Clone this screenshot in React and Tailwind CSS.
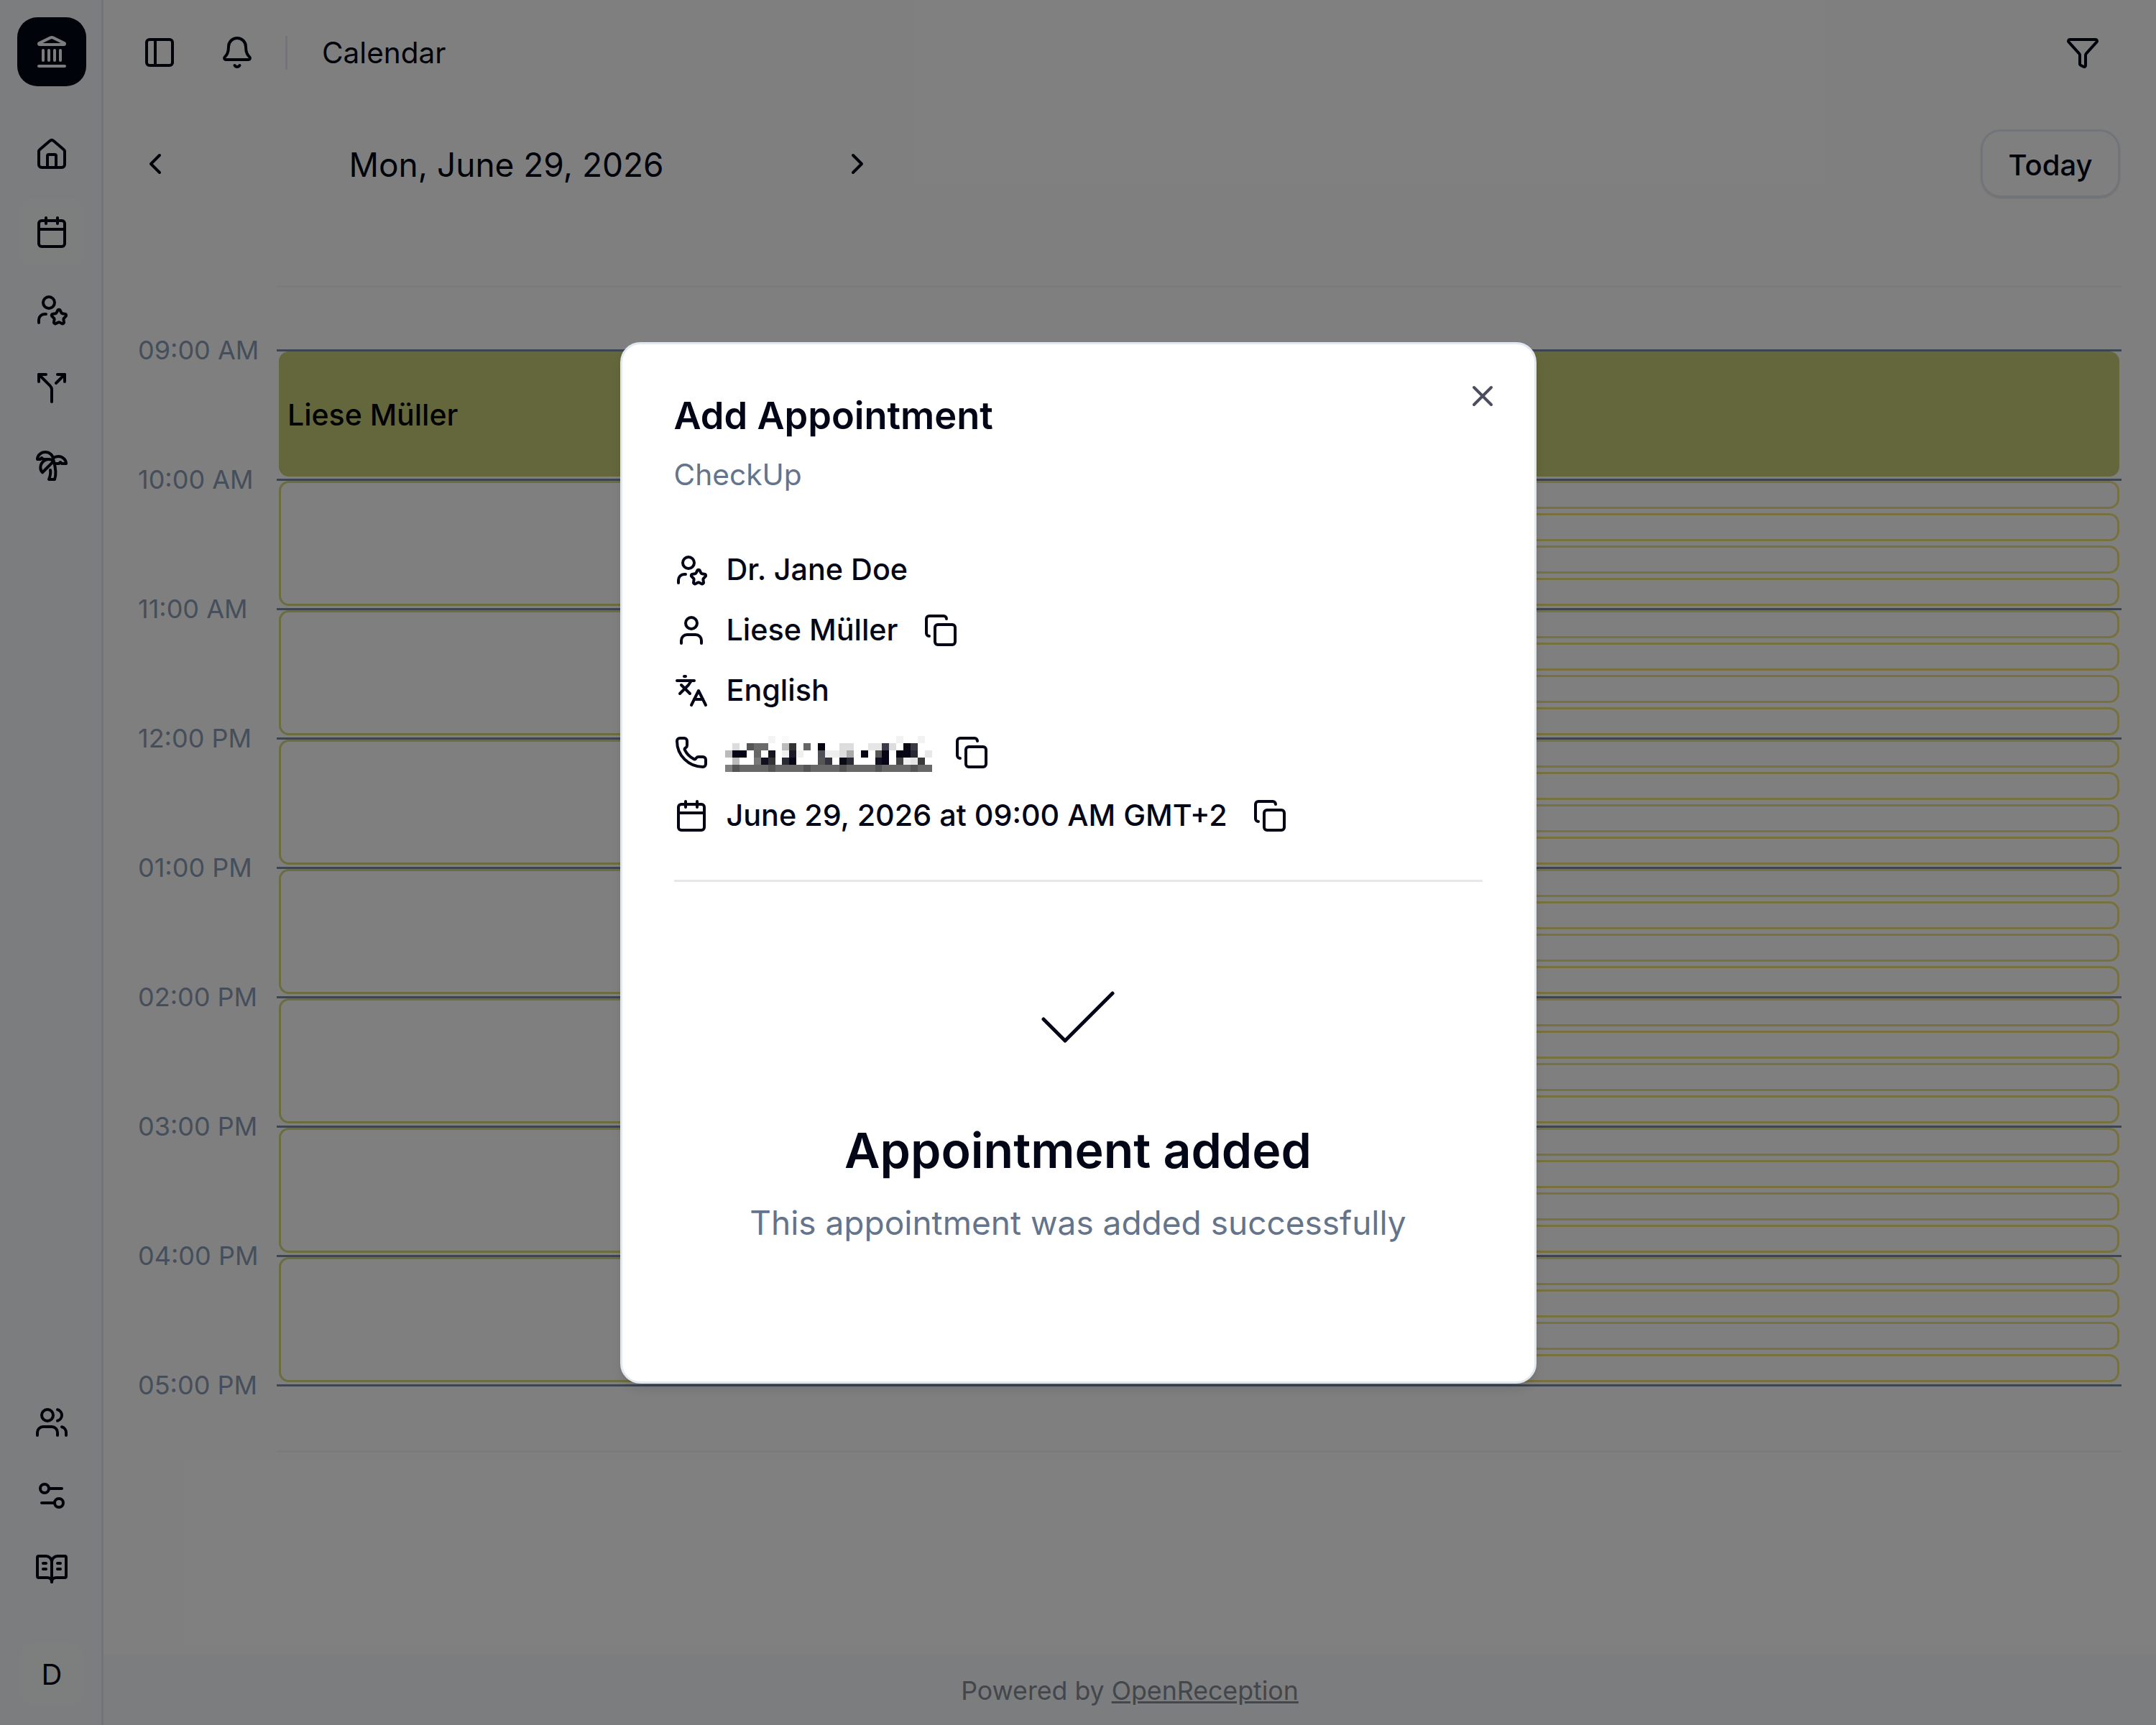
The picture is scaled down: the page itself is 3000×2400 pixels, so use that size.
import React from 'react';
import {
  Bell, BookOpenText, Calendar, Check, ChevronLeft, ChevronRight, Copy, Funnel, House, Landmark,
  Languages, PanelLeft, Phone, Settings2, Split, TreePalm, User, UserStar, Users, X,
} from 'lucide-react';

const HOURS = ['09:00 AM', '10:00 AM', '11:00 AM', '12:00 PM', '01:00 PM', '02:00 PM', '03:00 PM', '04:00 PM'];

// blurred out phone number, [column, colour] per row
const PIXELS = [
  [[6, '#f4f4f4'], [8, '#fafafa'], [24, '#f2f2f2'], [27, '#f2f2f2']],
  [[1, '#dcdcdc'], [3, '#555'], [4, '#6a6a6a'], [5, '#6a6a6a'], [8, '#bbb'], [9, '#333'], [11, '#666'], [13, '#050510'], [16, '#ddd'], [17, '#ddd'], [20, '#e6e6e6'], [21, '#e6e6e6'], [22, '#3a3a48'], [23, '#ddd'], [25, '#0a0a15'], [26, '#3a3a45']],
  [[0, '#bbb'], [1, '#050515'], [2, '#050515'], [4, '#666'], [6, '#151520'], [8, '#f0f0f0'], [9, '#1a1a25'], [10, '#f0f0f0'], [13, '#50505a'], [14, '#eee'], [15, '#eee'], [16, '#ddd'], [17, '#aaa'], [19, '#050515'], [21, '#555'], [22, '#050515'], [24, '#050515'], [25, '#050515'], [26, '#2a2a35'], [28, '#e8e8e8']],
  [[1, '#bbb'], [4, '#777'], [5, '#101020'], [6, '#333'], [8, '#2a2a35'], [9, '#050515'], [13, '#555'], [14, '#333340'], [16, '#0a0a15'], [17, '#2a2a35'], [21, '#101020'], [22, '#050515'], [24, '#444'], [25, '#eee'], [26, '#e5e5e5'], [27, '#3a3a3a']],
  Array.from({ length: 29 }, (_, i) => [i, i % 5 === 1 ? '#555' : i === 0 ? '#808080' : '#686868']),
];

function NavIcon({ icon: Icon, active }) {
  return (
    <div className={`flex h-[92px] w-[92px] items-center justify-center rounded-[20px] ${active ? 'bg-[#fbfcfd]' : ''}`}>
      <Icon size={48} strokeWidth={2} />
    </div>
  );
}

function Slot({ className }) {
  return <div className={`rounded-[14px] border-[3px] ${className}`} />;
}

function HourRow({ label, first }) {
  return (
    <div className="flex h-[180px]">
      <div className="w-[193px] -mt-[23px] text-[36px] leading-[48px] text-[#8a9cb6]">{label}</div>
      <div className="flex flex-1 gap-[6px] border-t-[3px] border-[#7a8aa0] px-[3px] pb-[3px]">
        {first ? (
          <div className="flex flex-1 items-center rounded-[14px] bg-[#c8ce76] px-[12px] pt-[4px] text-[41px] font-medium text-[#040404]">
            Liese Müller
          </div>
        ) : (
          <>
            <Slot className="flex-1 border-[#d6da7e]" />
            <div className="flex flex-1 flex-col gap-[6px]">
              <Slot className="flex-1 border-[#eee07e]" />
              <Slot className="flex-1 border-[#eee07e]" />
              <Slot className="flex-1 border-[#eee07e]" />
              <Slot className="flex-1 border-[#eee07e]" />
            </div>
          </>
        )}
      </div>
    </div>
  );
}

function InfoRow({ icon: Icon, children, copy, className = '' }) {
  return (
    <div className={`flex h-[48px] items-center ${className}`}>
      <Icon size={48} strokeWidth={2} className="shrink-0" />
      <div className="ml-[25px] text-[41.3px] font-medium">{children}</div>
      {copy && <Copy size={48} strokeWidth={2} className="ml-[35px] shrink-0" />}
    </div>
  );
}

export default function App() {
  return (
    <div className="relative flex h-screen w-full overflow-hidden bg-white font-['Inter',sans-serif] text-[#020617]">
      <aside className="flex w-[144px] shrink-0 flex-col items-center border-r-[3px] border-slate-200 bg-slate-50 pl-[3px]">
        <div className="mt-[24px] flex h-[96px] w-[96px] items-center justify-center rounded-[28px] bg-[#020617] text-slate-50">
          <Landmark size={48} strokeWidth={2} />
        </div>
        <nav className="mt-[49px] flex flex-col items-center gap-[16px]">
          <NavIcon icon={House} />
          <NavIcon icon={Calendar} active />
          <NavIcon icon={UserStar} />
          <NavIcon icon={Split} />
          <NavIcon icon={TreePalm} />
        </nav>
        <div className="mt-auto flex flex-col items-center gap-[54px] mb-[79px]">
          <Users size={48} strokeWidth={2} />
          <Settings2 size={48} strokeWidth={2} />
          <BookOpenText size={48} strokeWidth={2} />
        </div>
        <div className="mb-[26px] flex h-[88px] w-[88px] items-center justify-center rounded-[20px] bg-[#fbfcfd] text-[40px]">D</div>
      </aside>

      <main className="flex min-w-0 flex-1 flex-col">
        <header className="flex h-[146px] shrink-0 items-center pl-[54px] pr-[78px]">
          <PanelLeft size={48} strokeWidth={2} />
          <Bell size={48} strokeWidth={2} className="ml-[60px]" />
          <div className="ml-[43px] h-[47px] w-[3px] bg-slate-200" />
          <div className="ml-[48px] pt-[2px] text-[40.5px]">Calendar</div>
          <Funnel size={48} strokeWidth={2} className="ml-auto" />
        </header>

        <div className="mt-[34px] flex h-[95px] shrink-0 items-center justify-between pl-[48px] pr-[50px]">
          <div className="flex w-[1025px] items-center justify-between">
            <ChevronLeft size={48} strokeWidth={2} />
            <div className="mt-[3px] text-[46px]">Mon, June 29, 2026</div>
            <ChevronRight size={48} strokeWidth={2} />
          </div>
          <button className="h-[95px] w-[194px] rounded-[28px] border-[3px] border-slate-200 pt-[5px] text-[40px] font-medium shadow-sm">Today</button>
        </div>

        <div className="mx-[48px] mt-[122px]">
          <div className="ml-[193px] h-[89px] border-t-[3px] border-[#f5f7f9]" />
          {HOURS.map((h, i) => <HourRow key={h} label={h} first={i === 0} />)}
          <div className="flex h-[92px]">
            <div className="w-[193px] -mt-[23px] text-[36px] leading-[48px] text-[#8a9cb6]">05:00 PM</div>
            <div className="flex-1 border-t-[3px] border-[#7a8aa0]" />
          </div>
          <div className="ml-[193px] border-t-[3px] border-[#f5f7f9]" />
        </div>

        <footer className="mt-auto flex h-[98px] shrink-0 items-center justify-center bg-slate-50 pt-[4px] text-[35.7px] text-[#868c96]">
          <span>Powered by <span className="underline">OpenReception</span></span>
        </footer>
      </main>

      <div className="absolute inset-0 flex items-center justify-center bg-black/50">
        <div className="relative flex h-[1449px] w-[1275px] flex-col rounded-[28px] border-[3px] border-slate-200 bg-white px-[72px] pt-[64px] shadow-lg">
          <X size={48} strokeWidth={2} className="absolute right-[48px] top-[48px] text-[#4b4e5c]" />
          <div className="text-[52.4px] font-semibold leading-[70px]">Add Appointment</div>
          <div className="mt-[20px] text-[40.7px] leading-[56px] text-[#64748b]">CheckUp</div>

          <div className="mt-[80px] flex flex-col gap-[36px]">
            <InfoRow icon={UserStar}>Dr. Jane Doe</InfoRow>
            <InfoRow icon={User} copy>Liese Müller</InfoRow>
            <InfoRow icon={Languages}>English</InfoRow>
            <InfoRow icon={Phone} className="mt-[2px]">
              <div className="flex items-center">
                <svg width="288" height="50" viewBox="0 0 290 50" preserveAspectRatio="none" shapeRendering="crispEdges" className="-ml-[2px] mt-[4px]">
                  {PIXELS.map((row, y) => row.map(([x, c]) => <rect key={`${x}-${y}`} x={x * 10} y={y * 10} width="10" height="10" fill={c} />))}
                </svg>
                <Copy size={48} strokeWidth={2} className="ml-[31px]" />
              </div>
            </InfoRow>
            <InfoRow icon={Calendar} copy className="mt-[4px]">June 29, 2026 at 09:00 AM GMT+2</InfoRow>
          </div>

          <div className="mt-[65px] h-[3px] bg-[#e5e7eb]" />

          <div className="flex flex-col items-center">
            <Check size={144} strokeWidth={0.83} className="mt-[119px]" />
            <div className="mt-[65px] text-[68px] font-semibold leading-[90px]">Appointment added</div>
            <div className="mt-[23px] text-[46px] leading-[66px] text-[#64748b]">This appointment was added successfully</div>
          </div>
        </div>
      </div>
    </div>
  );
}
